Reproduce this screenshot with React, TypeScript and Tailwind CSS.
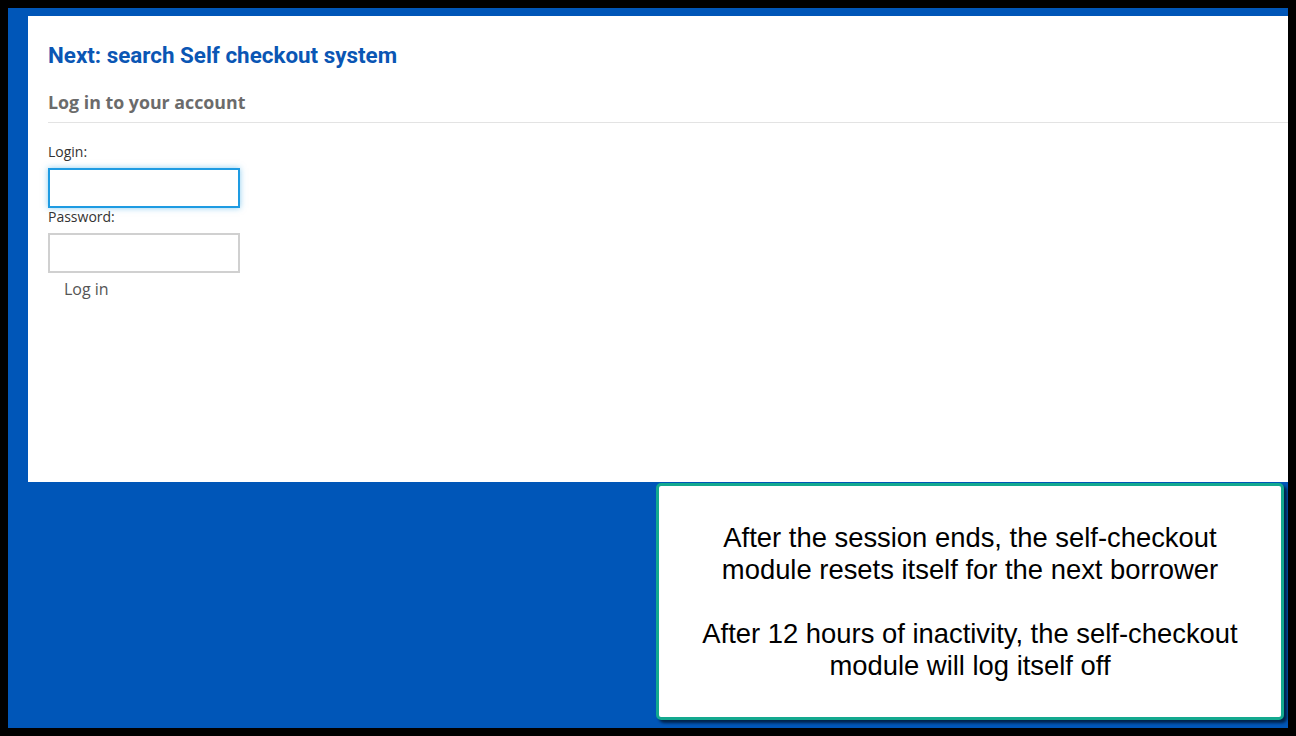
import React from 'react';

export default function App() {
  return (
    <div className="h-[736px] w-[1296px] bg-black p-2 overflow-hidden">
      <div className="flex h-full flex-col bg-[#0056b8] pt-2 pl-5">
        <div className="h-[466px] bg-white pl-5 pt-[25px]">
          <h1 className="font-['Roboto',sans-serif] text-[22.4px] font-bold leading-7 text-[#0a56b4]">
            Next: search Self checkout system
          </h1>
          <h2 className="mt-[21px] border-b border-[#e3e3e3] pb-[8px] font-['Open_Sans',sans-serif] text-[17.8px] font-bold leading-6 text-[#6b6b6b]">
            Log in to your account
          </h2>
          <form className="mt-5 flex flex-col font-['Open_Sans',sans-serif] text-[14px] text-[#333]">
            <label className="leading-[18px]">Login:</label>
            <input
              type="text"
              className="mt-[7px] h-[40px] w-[192px] border-2 border-[#1e9be2] bg-white shadow-[0_0_6px_rgba(30,155,226,0.5)] outline-none"
            />
            <label className="leading-[18px]">Password:</label>
            <input
              type="password"
              className="mt-[7px] h-[40px] w-[192px] border-2 border-[#d0d0d0] bg-white outline-none"
            />
            <button type="button" className="ml-4 mt-[4px] self-start text-left text-[16px] leading-6 text-[#555]">
              Log in
            </button>
          </form>
        </div>
        <div className="ml-[628px] mt-[1px] flex h-[237px] w-[628px] flex-col items-center justify-center gap-8 rounded-[5px] border-[3px] border-[#13a98f] bg-white text-center font-['Liberation_Sans',Arial,sans-serif] text-[27.4px] leading-8 text-black shadow-[3px_3px_3px_rgba(0,0,0,0.6)]">
          <p>
            After the session ends, the self-checkout
            <br />
            module resets itself for the next borrower
          </p>
          <p>
            After 12 hours of inactivity, the self-checkout
            <br />
            module will log itself off
          </p>
        </div>
      </div>
    </div>
  );
}
